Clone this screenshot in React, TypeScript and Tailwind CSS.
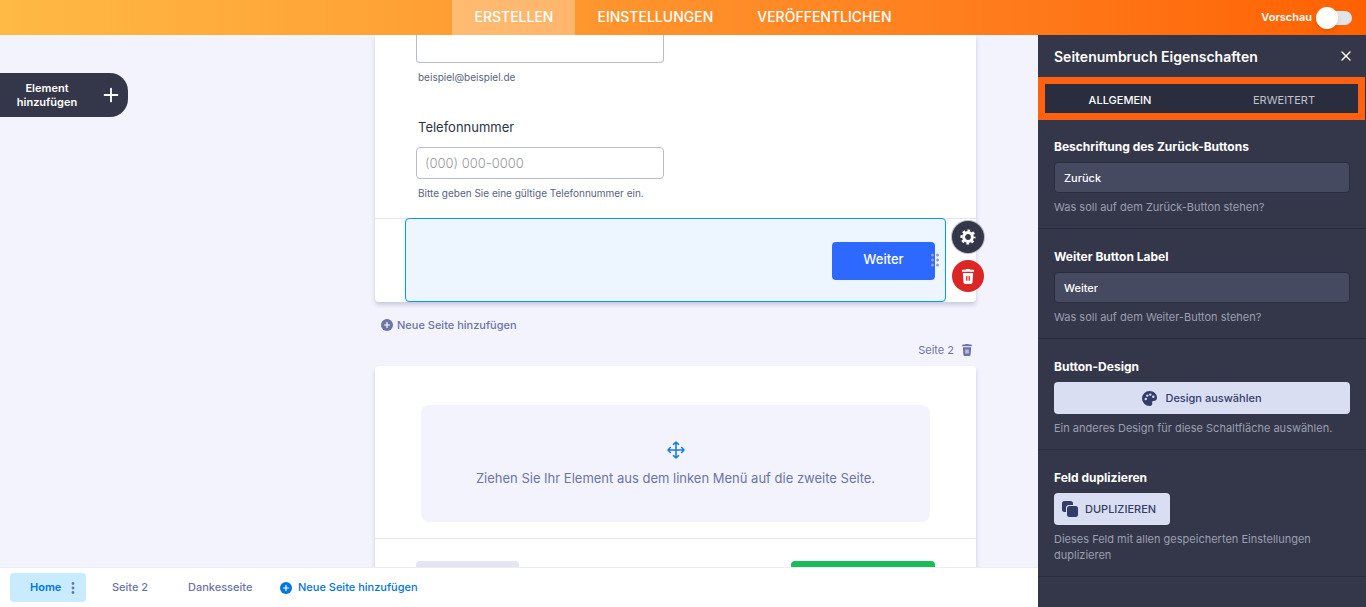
import React from 'react';
import { Plus, X } from 'lucide-react';

const navItems = ['ERSTELLEN', 'EINSTELLUNGEN', 'VERÖFFENTLICHEN'];

const PlusCircle: React.FC = () => (
  <svg width="12" height="12" viewBox="0 0 12 12" className="shrink-0">
    <circle cx="6" cy="6" r="6" fill="currentColor" />
    <path d="M6 3.4v5.2M3.4 6h5.2" stroke="#fff" strokeWidth="1.2" strokeLinecap="round" />
  </svg>
);

const TrashIcon: React.FC<{ width: number; height: number; hole: string }> = ({ width, height, hole }) => (
  <svg width={width} height={height} viewBox="0 0 12 15" className="shrink-0">
    <path
      d="M3.500.7Q3.700 0 4.400 0h3.200q.7 0 .9.700h2.700q.8 0 .8.800v1.300H0V1.500Q0 .7.8.7zM.8 4h10.400l-.7 9.300q-.1 1.700-1.700 1.700H3.200q-1.600 0-1.700-1.700z"
      fill="currentColor"
    />
    <path d="M4.800 7v4.800M7.200 7v4.800" stroke={hole} strokeWidth="1.300" />
  </svg>
);

const GearIcon: React.FC = () => (
  <svg width="16" height="16" viewBox="0 0 16 16" fill="none" stroke="currentColor">
    <circle cx="8" cy="8" r="4.400" strokeWidth="3" />
    <circle cx="8" cy="8" r="6.500" strokeWidth="2.200" strokeDasharray="2.700 2.405" strokeDashoffset="1.350" />
  </svg>
);

const DragDots: React.FC = () => (
  <svg width="8" height="14" viewBox="0 0 8 14" fill="#979dc6">
    {[2, 7, 12].map((y) => (
      <g key={y}>
        <circle cx="1.5" cy={y} r="1.5" />
        <circle cx="6.5" cy={y} r="1.5" />
      </g>
    ))}
  </svg>
);

const MoveIcon: React.FC = () => (
  <svg width="18" height="18" viewBox="0 0 18 18" fill="none" stroke="#1b7fdc" strokeWidth="1.600" strokeLinecap="round" strokeLinejoin="round">
    <path d="M9 1v16M1 9h16M6.500 3.300L9 1l2.500 2.300M6.500 14.700L9 17l2.500-2.300M3.300 6.500L1 9l2.300 2.500M14.700 6.500L17 9l-2.300 2.500" />
  </svg>
);

const PaletteIcon: React.FC = () => (
  <svg width="15" height="15" viewBox="0 0 15 15">
    <path d="M7.500 0C11.700 0 15 2.900 15 6.700c0 2.300-1.700 3.300-3.500 3.300-1.300 0-1.600.8-1.300 1.700.5 1.700-.4 3.300-2.700 3.300A7.500 7.500 0 017.500 0z" fill="#343c6a" />
    <g fill="#dadef3">
      <circle cx="3.800" cy="8" r="1.200" />
      <circle cx="5.300" cy="4.600" r="1.200" />
      <circle cx="8.300" cy="3.600" r="1.200" />
      <circle cx="11.300" cy="5.800" r="1.200" />
    </g>
  </svg>
);

const CopyIcon: React.FC = () => (
  <svg width="16" height="16" viewBox="0 0 16 16" fill="#343c6a">
    <path d="M2.500 0h6Q11 0 11 2.500V4H7Q4 4 4 7v4H2.500Q0 11 0 8.500v-6Q0 0 2.500 0z" />
    <rect x="5" y="5" width="11" height="11" rx="2.500" />
  </svg>
);

const PanelSection: React.FC<{ title: string; hint: string; htmlFor?: string; children: React.ReactNode }> = ({
  title,
  hint,
  htmlFor,
  children
}) => (
  <section className="border-b border-[#2a2d3d] px-4 pt-[19px] pb-[13px]">
    {htmlFor ? (
      <label htmlFor={htmlFor} className="block text-[12px] leading-[18px] font-bold text-white">{title}</label>
    ) : (
      <h3 className="text-[12px] leading-[18px] font-bold text-white">{title}</h3>
    )}
    <div className="mt-1.5 flex">{children}</div>
    <p className="mt-1.5 text-[11px] leading-4 text-[#9a9fb0]">{hint}</p>
  </section>
);

const Header: React.FC = () => (
  <header className="grid h-[35px] shrink-0 grid-cols-[1fr_auto_1fr] bg-linear-to-r from-[#ffb944] to-[#ff6100] text-white">
    <nav className="col-start-2 flex">
      {navItems.map((item, i) => (
        <a
          key={item}
          href="#"
          className={`flex items-center px-[22px] pb-0.5 text-[14px] font-medium ${i === 0 ? 'bg-white/30' : ''}`}
        >
          {item}
        </a>
      ))}
    </nav>
    <label className="flex items-center justify-end gap-1 pr-3.5 text-[11px] font-semibold">
      Vorschau
      <input type="checkbox" role="switch" className="peer sr-only" />
      <span className="relative ml-1.5 h-3.5 w-[30px] rounded-full bg-[#e3e4ea]">
        <span className="absolute -top-1 -left-1.5 size-[22px] rounded-full bg-white shadow-md"></span>
      </span>
    </label>
  </header>
);

const FormCanvas: React.FC = () => (
  <div className="relative flex min-h-0 flex-1 justify-center overflow-hidden bg-[#f3f3fe] pl-[313px]">
    <button className="absolute top-[38px] left-0 flex h-11 w-32 items-center justify-between rounded-r-[18px] bg-[#343749] pr-1.5 pl-4 text-white">
      <span className="w-[62px] text-center text-[11px] leading-3.5 font-semibold">Element hinzufügen</span>
      <Plus size={22} strokeWidth={2} />
    </button>

    <div className="w-[601px] shrink-0">
      <div className="rounded-b bg-white shadow-[0_3px_4px_#c9cbdd]">
        <div className="px-[41px]">
          <input aria-label="E-Mail" className="block h-7 w-[248px] rounded-b border border-t-0 border-[#b8bdc9] px-2" />
          <p className="mt-1.5 px-0.5 text-[10px] leading-4 text-[#57647e]">beispiel@beispiel.de</p>
          <label htmlFor="phone" className="mt-8 block px-0.5 text-[13px] leading-5 text-[#2c3345]">
            Telefonnummer
          </label>
          <input
            id="phone"
            placeholder="(000) 000-0000"
            className="mt-2.5 block h-8 w-[248px] rounded border border-[#b8bdc9] px-2 text-[13px] font-light placeholder:text-[#96969c]"
          />
          <p className="mt-1.5 px-0.5 text-[10px] leading-4 text-[#57647e]">Bitte geben Sie eine gültige Telefonnummer ein.</p>
        </div>
        <div className="relative mt-[17px] border-t border-[#e3e5f5] px-[30px]">
          <div className="-mt-px flex h-[84px] items-center justify-end rounded border border-[#0099ff] bg-[#edf6ff] pt-0.5 pr-2.5">
            <button className="h-[38px] w-[103px] rounded bg-[#2e69ff] pb-0.5 text-[13px] font-medium text-white">Weiter</button>
          </div>
          <span className="absolute top-[34px] right-[37px]">
            <DragDots />
          </span>
          <div className="absolute top-[2px] -right-2 flex flex-col gap-[7px] text-white">
            <button aria-label="Eigenschaften" className="flex size-8 items-center justify-center rounded-full bg-[#343749] shadow-[0_0_0_1px_#b9bbc9]">
              <GearIcon />
            </button>
            <button aria-label="Löschen" className="flex size-8 items-center justify-center rounded-full bg-[#dc2626]">
              <TrashIcon width={12} height={15} hole="#dc2626" />
            </button>
          </div>
        </div>
      </div>

      <button className="mt-3.5 ml-1.5 flex h-[18px] items-center gap-1 text-[11px] font-medium text-[#6c73a8]">
        <PlusCircle />
        Neue Seite hinzufügen
      </button>
      <div className="mt-[7px] mr-1 flex h-[18px] items-center justify-end gap-2 text-[11px] text-[#6c73a8]">
        Seite 2
        <button aria-label="Seite 2 löschen">
          <TrashIcon width={10} height={12} hole="#f3f3fe" />
        </button>
      </div>

      <div className="mt-[7px] h-[260px] rounded-t bg-white pt-[39px] shadow-[0_3px_4px_#c9cbdd]">
        <div className="mx-[46px] flex h-[117px] flex-col items-center justify-center gap-2.5 rounded-lg bg-[#f3f3fe]">
          <MoveIcon />
          <p className="text-[13px] leading-[18px] text-[#6c73a8]">
            Ziehen Sie Ihr Element aus dem linken Menü auf die zweite Seite.
          </p>
        </div>
        <div className="mt-4 flex justify-between border-t border-[#e3e5f5] px-[41px] pt-[22px]">
          <button aria-label="Zurück" className="h-[38px] w-[103px] rounded bg-[#e3e5f1]"></button>
          <button aria-label="Absenden" className="h-[38px] w-36 rounded bg-[#18bd5b]"></button>
        </div>
      </div>
    </div>
  </div>
);

const PageBar: React.FC = () => (
  <nav className="flex h-10 shrink-0 items-center border-t border-[#ebebf0] bg-white pl-2.5 text-[11px] font-medium text-[#6c73a8]">
    <a href="#" className="flex h-[29px] w-[76px] items-center justify-between rounded bg-[#c8ebff] pr-[11px] pl-5 font-semibold text-[#0075e3]">
      Home
      <svg width="4" height="12" viewBox="0 0 4 12" fill="#6c73a8">
        <circle cx="2" cy="1.500" r="1.400" />
        <circle cx="2" cy="6" r="1.400" />
        <circle cx="2" cy="10.500" r="1.400" />
      </svg>
    </a>
    <a href="#" className="ml-[26px] w-[76px]">Seite 2</a>
    <a href="#" className="w-[92px]">Dankesseite</a>
    <button className="flex items-center gap-1.5 font-medium text-[#0075e3]">
      <PlusCircle />
      Neue Seite hinzufügen
    </button>
  </nav>
);

const PropertiesPanel: React.FC = () => (
  <aside className="w-[328px] shrink-0 overflow-hidden bg-[#343749]">
    <div className="flex h-[42px] items-center justify-between pr-3 pl-4 text-white">
      <h2 className="text-[14px] font-semibold">Seitenumbruch Eigenschaften</h2>
      <button aria-label="Schließen">
        <X size={16} strokeWidth={2.2} />
      </button>
    </div>
    <div className="relative grid h-[42px] grid-cols-2 bg-[#2a2d3d] pt-1 text-[11px] text-[#c0c3ce]">
      <button className="font-medium text-white">ALLGEMEIN</button>
      <button>ERWEITERT</button>
      <div className="pointer-events-none absolute inset-x-0 top-0 -bottom-px mr-px border-[7px] border-[#ff6110]"></div>
    </div>

    <PanelSection title="Beschriftung des Zurück-Buttons" hint="Was soll auf dem Zurück-Button stehen?" htmlFor="back-label">
      <input
        id="back-label"
        defaultValue="Zurück"
        className="h-[31px] w-full rounded-sm border border-[#2a2d3d] bg-[#454a60] px-[9px] text-[11px] font-medium text-white"
      />
    </PanelSection>
    <PanelSection title="Weiter Button Label" hint="Was soll auf dem Weiter-Button stehen?" htmlFor="next-label">
      <input
        id="next-label"
        defaultValue="Weiter"
        className="h-[31px] w-full rounded-sm border border-[#2a2d3d] bg-[#454a60] px-[9px] text-[11px] font-medium text-white"
      />
    </PanelSection>
    <PanelSection title="Button-Design" hint="Ein anderes Design für diese Schaltfläche auswählen.">
      <button className="flex h-8 w-full items-center justify-center gap-2 rounded-sm bg-[#dadef3] text-[11px] font-medium text-[#343c6a]">
        <PaletteIcon />
        Design auswählen
      </button>
    </PanelSection>
    <PanelSection title="Feld duplizieren" hint="Dieses Feld mit allen gespeicherten Einstellungen duplizieren">
      <button className="flex h-8 w-[116px] items-center gap-[7px] rounded-sm bg-[#dadef3] pl-2 text-[11px] font-medium text-[#343c6a]">
        <CopyIcon />
        DUPLIZIEREN
      </button>
    </PanelSection>
  </aside>
);

const App: React.FC = () => {
  return (
    <div className="flex h-screen flex-col overflow-hidden font-['Inter',sans-serif]">
      <Header />
      <div className="flex min-h-0 flex-1">
        <main className="flex min-w-0 flex-1 flex-col">
          <FormCanvas />
          <PageBar />
        </main>
        <PropertiesPanel />
      </div>
    </div>
  );
};

export default App;
